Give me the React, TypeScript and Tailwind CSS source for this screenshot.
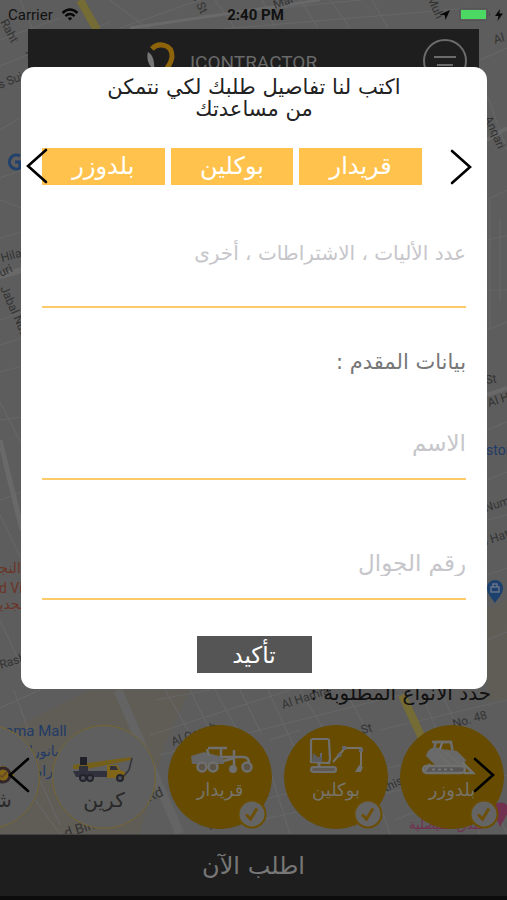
import type { ReactNode } from "react";

/**
 * Order request screen: the map page with its machine picker sits in the
 * back (dimmed), the request dialog lies over it.
 */

const ARABIC = "font-['DejaVu_Sans',sans-serif]";

/* ---- Map ---------------------------------------------------------- */
function StreetMap() {
  return (
    <svg
      aria-hidden="true"
      className="absolute inset-0 h-full w-full"
      viewBox="0 0 507 900"
      preserveAspectRatio="xMidYMid slice"
    >
      <rect width="507" height="900" fill="#5d5d5d" />
      <path d="M0 735 L90 690 L190 690 L165 745 L140 834 L0 834Z" fill="#605d57" />
      <path d="M487 610 L507 600 V700 H487Z" fill="#605d57" />
      <g stroke="#666666" fill="none" strokeWidth="1.2">
        <path d="M0 40 L60 18 M0 66 L110 22 M20 0 L60 92 M110 0 L150 30 M0 130 L30 112 M120 28 L200 0" />
        <path d="M215 0 L235 28 M262 0 L275 28 M300 0 L318 28 M330 0 L350 28 M372 0 L388 28 M200 16 L440 -8 M210 30 L470 8" />
        <path d="M0 178 L22 170 M0 200 L22 208 M0 238 L22 232 M0 320 L22 312 M0 345 L22 338 M0 372 L22 366 M0 420 L22 417 M0 402 L22 445 M0 500 L22 492 M0 515 L22 560 M0 620 L22 668" />
        <path d="M480 60 L507 48 M487 95 L507 150 M487 200 L507 190 M487 240 L507 236 M490 200 V330 M487 290 H507 M487 330 L507 322 M500 220 V300 M487 430 L507 422 M487 480 L507 472 M487 520 L507 515 M487 575 L507 568 M487 640 L507 632" />
        <path d="M0 708 L40 690 M14 690 L30 735 M155 700 L210 690 M150 735 L290 690 M160 755 L420 690 M165 690 L205 760 M190 690 L215 740 M215 690 L240 735 M240 690 L262 735 M268 690 L300 760 M300 690 L330 740 M345 690 L372 740 M420 690 L480 834 M440 690 L507 834 M380 730 L507 700 M270 770 L290 834 M262 800 L400 765 M260 820 L400 790 M375 790 L390 834 M395 820 L507 775 M35 800 L60 834 M40 780 L60 825 M270 740 L300 730" />
      </g>
      <g stroke="#696969" fill="none">
        <path d="M0 276 L22 270" strokeWidth="6" />
        <path d="M0 440 L22 530" strokeWidth="5" />
        <path d="M118 690 L180 834" strokeWidth="9" stroke="#646464" />
        <path d="M487 140 L507 128 M487 395 L507 388" strokeWidth="4" />
        <path d="M130 28 L320 0" strokeWidth="3" />
      </g>
      <path d="M80 0 L97 30" stroke="#756b35" strokeWidth="8" />
      <path d="M402 695 L422 738" stroke="#756b35" strokeWidth="8" />
      <g
        fill="#333333"
        className="font-['Roboto','DejaVu_Sans',sans-serif]"
        fontSize="12"
      >
        <text transform="translate(0 22) rotate(62)">Raht</text>
        <text transform="translate(25 52) rotate(65)">Ra</text>
        <text transform="translate(0 89) rotate(-22)">s Suj</text>
        <text transform="translate(192 -4) rotate(65)">a St</text>
        <text transform="translate(275 9) rotate(-20)">Mar</text>
        <text transform="translate(427 -2) rotate(66)">Muh</text>
        <text transform="translate(495 44) rotate(-18)">Al</text>
        <text transform="translate(484 118) rotate(66)">Anqari</text>
        <text transform="translate(2 262) rotate(-15)">Hilal</text>
        <text transform="translate(1 277) rotate(-25)">uri</text>
        <text transform="translate(0 288) rotate(66)">Jabal Nuur</text>
        <text transform="translate(486 384) rotate(-8)">St</text>
        <text transform="translate(489 407) rotate(-18)">Al Ha</text>
        <text transform="translate(486 512) rotate(-18)">Num</text>
        <text transform="translate(486 545) rotate(-18)">i Hat</text>
        <text transform="translate(1 669) rotate(-18)">Rash</text>
        <text transform="translate(283 709) rotate(-18)">Al Hamra</text>
        <text transform="translate(173 746) rotate(-20)">Al Qasab</text>
        <text transform="translate(362 734) rotate(-14)">St</text>
        <text transform="translate(454 728) rotate(-16)">No. 48</text>
        <text transform="translate(149 802) rotate(-24)" fontSize="14">Rd</text>
        <text transform="translate(66 838) rotate(-18)" fontSize="14">d Bin</text>
        <text transform="translate(386 792) rotate(-26)">this</text>
        <text transform="translate(210 830) rotate(-12)">Al</text>
      </g>
      <path d="M20 156 A7 7 0 1 0 20 168 V162 H15" stroke="#22406c" strokeWidth="3" fill="none" />
      <g className="font-['Roboto','DejaVu_Sans',sans-serif]" fontSize="14">
        <text x="486" y="455" fill="#233a66">store</text>
        <text x="5" y="736" fill="#233a66" fontSize="15">ama Mall</text>
        <text x="59" y="756" fill="#233a66" textAnchor="end">بانوراما</text>
        <text x="53" y="776" fill="#233a66" textAnchor="end">راما</text>
        <text x="-8" y="573" fill="#6b3427">النجد</text>
        <text x="-1" y="593" fill="#6b3427">d Vill</text>
        <text x="-8" y="609" fill="#6b3427">نجدية</text>
        <text x="409" y="829" fill="#71304f" fontSize="13">فندق الفيصلية</text>
      </g>
      <path d="M495 603 C492 598 487 594 487 588 A8 8 0 0 1 503 588 C503 594 498 598 495 603Z" fill="#1d416f" />
      <path d="M491 587 H499 V592 H491Z M493 587 V584 H497 V587" fill="none" stroke="#667287" strokeWidth="1.5" />
      <path d="M500 827 C497 818 492 814 492 810 A9 9 0 0 1 507 805 V814Z" fill="#71304f" />
    </svg>
  );
}

/* ---- Small drawings ----------------------------------------------- */
function Chevron({ side }: { side: "left" | "right" }) {
  return (
    <svg viewBox="0 0 22 36" className="h-9 w-[22px]" fill="none" stroke="#000" strokeWidth="2.6" strokeLinecap="round" strokeLinejoin="miter">
      <path d={side === "left" ? "M20 2 L2 18 L20 34" : "M2 2 L20 18 L2 34"} />
    </svg>
  );
}

function Bulldozer() {
  return (
    <svg viewBox="0 0 66 44" className="h-11 w-[66px]">
      <path d="M14 18 L17 8 H32 L34 20" fill="none" stroke="#6d6d6d" strokeWidth="2.5" />
      <path d="M13 8 H33" stroke="#6d6d6d" strokeWidth="2.5" />
      <path d="M7 22 C9 13 17 12 22 15 L38 17 L47 26 L43 34 L17 32Z" fill="#696969" />
      <path d="M23 9 L21 15" stroke="#777a88" strokeWidth="2" />
      <path d="M20 21 L33 32 M27 18 L40 30" stroke="#77736a" strokeWidth="1" />
      <rect x="4" y="32" width="42" height="7" rx="3.5" fill="#575654" stroke="#70706f" strokeWidth="2.5" />
      <path d="M11 30 L5 38 M43 28 L54 39 H45" stroke="#70706f" strokeWidth="2.5" fill="none" />
      <path d="M13 35.5 H36" stroke="#74747a" strokeWidth="2" strokeDasharray="3 3" />
    </svg>
  );
}

function Excavator() {
  return (
    <svg viewBox="0 0 66 44" className="h-11 w-[66px]">
      <path d="M8 28 V7 Q8 5 10 5 H24 Q26 5 26 7 L27 25 L26 29Z" fill="none" stroke="#6f6f6f" strokeWidth="2.2" />
      <path d="M10 19 L15 23 H19 V28 H9Z" fill="#5c5c60" />
      <path d="M18 19 V23" stroke="#62676f" strokeWidth="2" />
      <rect x="8" y="33" width="25" height="5" rx="2.5" fill="#5e5953" stroke="#6f6f6f" strokeWidth="2.2" />
      <path d="M16 29 V32" stroke="#6f6f6f" strokeWidth="3" />
      <path d="M30 28 L42 14 L58 14 L58 32" fill="none" stroke="#77736a" strokeWidth="2" />
      <path d="M39 14 L43 14 M56 16 H60 M35 22 L38 20" stroke="#65666b" strokeWidth="4" />
      <path d="M56 31 L60 33 L58 38 H52Z" fill="#70706f" />
    </svg>
  );
}

function Grader() {
  return (
    <svg viewBox="0 0 66 44" className="h-11 w-[66px]">
      <path d="M4 22 L17 18 L36 23 L37 30 H5Z" fill="#656565" />
      <path d="M21 14 H40 M20 15 L22 22 M34 15 V23" stroke="#6f6f6f" strokeWidth="2.5" />
      <path d="M35 23 H56 Q62 23 62 29 M47 16 V34 M36 27 L48 24" fill="none" stroke="#6f6f6f" strokeWidth="2.5" />
      <circle cx="15" cy="33" r="4.5" fill="#5b5447" stroke="#6f6f6f" strokeWidth="2.5" />
      <circle cx="26" cy="33" r="4.5" fill="#5b5447" stroke="#6f6f6f" strokeWidth="2.5" />
      <circle cx="46" cy="35" r="4" fill="#6f6f6f" />
      <circle cx="60" cy="33" r="4.5" fill="#5b5447" stroke="#6f6f6f" strokeWidth="2.5" />
    </svg>
  );
}

function CraneTruck() {
  return (
    <svg viewBox="0 0 66 44" className="h-11 w-[66px]">
      <path d="M2 19 L60 11 V14 L16 23 H2Z" fill="#74601a" />
      <rect x="9" y="11" width="7" height="8" fill="#1f2028" />
      <path d="M8 20 H17 V25 H8Z" fill="#30313a" />
      <path d="M2 25 H36 V31 H5Z" fill="#30313c" />
      <path d="M36 31 V19 H46 L49 24 L54 26 V32 H36Z" fill="#806616" />
      <path d="M39 20 H45 L47 24 H39Z" fill="#30313a" />
      <path d="M61 12 L58 24 L51 32" fill="none" stroke="#34353c" strokeWidth="1.6" />
      <g fill="#4e4e58" stroke="#23242b" strokeWidth="2">
        <circle cx="12" cy="32" r="3" />
        <circle cx="19" cy="32" r="3" />
        <circle cx="49" cy="32" r="3" />
      </g>
    </svg>
  );
}

function Loader() {
  return (
    <svg viewBox="0 0 66 44" className="h-11 w-[66px]">
      <path d="M14 24 L50 20 L60 30 H14Z" fill="#806616" />
      <circle cx="48" cy="29" r="7" fill="#806616" stroke="#33262a" strokeWidth="3" />
      <path d="M44 29 L47 31 L52 26" stroke="#6a4b28" strokeWidth="2" fill="none" />
    </svg>
  );
}

/* ---- Machine picker ----------------------------------------------- */
interface Machine {
  name: string;
  drawing: ReactNode;
  selected: boolean;
}

const machines: Machine[] = [
  { name: "بلدوزر", drawing: <Bulldozer />, selected: true },
  { name: "بوكلين", drawing: <Excavator />, selected: true },
  { name: "قريدار", drawing: <Grader />, selected: true },
  { name: "كرين", drawing: <CraneTruck />, selected: false },
  { name: "شيول", drawing: <Loader />, selected: false },
];

function MachineButton({ name, drawing, selected }: Machine) {
  return (
    <button
      type="button"
      aria-pressed={selected}
      className={`relative flex size-[104px] shrink-0 flex-col items-center rounded-full border ${
        selected
          ? "border-[#664b00] bg-[#664b00] pt-2 text-lg leading-6 text-[#77736a]"
          : "border-[#75652f] bg-[#5f5f5f] pt-5 text-xl leading-5 text-[#292929]"
      }`}
    >
      {drawing}
      <span>{name}</span>
      {selected && (
        <svg viewBox="0 0 30 30" className="absolute right-1 -bottom-px size-[30px]">
          <circle cx="15" cy="15" r="13.5" fill="#646464" stroke="#6b4e00" strokeWidth="2" />
          <path d="M9 15.5 L13.5 20 L20 9.5" fill="none" stroke="#6d4f08" strokeWidth="3" />
        </svg>
      )}
    </button>
  );
}

/* ---- Status bar and header ---------------------------------------- */
function StatusBar() {
  return (
    <div className="grid h-[29px] grid-cols-3 items-center pr-1 pl-2 font-['Roboto',sans-serif] text-[15px] leading-5 text-[#111]">
      <div className="flex items-center gap-2">
        <span>Carrier</span>
        <svg viewBox="0 0 18 13" className="h-[13px] w-[18px]" fill="none" stroke="#080808" strokeWidth="2.4">
          <path d="M1.5 5 Q9 -1.8 16.5 5 M4.4 8.2 Q9 4 13.6 8.2" />
          <path d="M6.8 10.2 Q9 8.4 11.2 10.2 L9 12.5Z" fill="#080808" stroke="none" />
        </svg>
      </div>
      <span className="text-center font-bold">2:40 PM</span>
      <div className="flex items-center justify-end gap-1">
        <svg viewBox="0 0 12 12" className="mr-1 size-3" fill="#080808">
          <path d="M11 1 L6.5 11 L5.8 6.3 L1 5.6Z" />
        </svg>
        <svg viewBox="0 0 32 13" className="h-[13px] w-8">
          <rect x="0.5" y="0.5" width="28" height="12" rx="2" fill="none" stroke="#555" />
          <rect x="2" y="2" width="25" height="9" fill="#4bd863" />
          <path d="M30 4 Q32 6.5 30 9Z" fill="#444" />
        </svg>
        <svg viewBox="0 0 8 12" className="h-3 w-2" fill="#080808">
          <path d="M5 0 L0 7 H3.5 L2.5 12 L8 4.6 H4.4Z" />
        </svg>
      </div>
    </div>
  );
}

function Header() {
  return (
    <header className="mx-7 flex h-16 justify-between bg-[#1e1e1e] pr-3">
      <div className="flex flex-1 items-start justify-center gap-3 pt-3 pl-3">
        <svg viewBox="0 0 32 36" className="h-9 w-8">
          <path d="M6 8 C12 1 26 3 26 15 C26 20 24 23 21 27" fill="none" stroke="#8e640b" strokeWidth="5" />
          <path d="M2 11 C6 13 9 19 8 29 C3 25 0 18 2 11Z" fill="#777" />
        </svg>
        <span className="pt-2 font-['Liberation_Sans_Narrow','Roboto',sans-serif] text-[19px] leading-7 text-[#696969]">
          ICONTRACTOR
        </span>
      </div>
      <button type="button" aria-label="القائمة" className="mt-[10px] size-11 rounded-full">
        <svg viewBox="0 0 44 44" className="size-11" fill="none" stroke="#6b6b6b" strokeWidth="2">
          <circle cx="22" cy="22" r="21" />
          <path d="M11 18 H33 M14 26 H30" />
        </svg>
      </button>
    </header>
  );
}

/* ---- Request dialog ----------------------------------------------- */
const chips = ["بلدوزر", "بوكلين", "قريدار"];

const fieldClass =
  "block w-full resize-none border-b-2 border-[#fccb6c] bg-transparent text-right leading-7 text-[#555] outline-none placeholder:text-[#c6c6ca] placeholder:opacity-100";

function RequestDialog() {
  return (
    <form
      role="dialog"
      aria-labelledby="request-title"
      className="relative w-full rounded-[13px] bg-white px-[21px] pt-[9px] pb-4"
    >
      <h1 id="request-title" className="mx-auto max-w-[340px] text-center text-[21px] leading-[22px] text-[#222]">
        اكتب لنا تفاصيل طلبك لكي نتمكن
        <br />
        من مساعدتك
      </h1>

      <div dir="ltr" className="relative mt-7 flex h-[37px] items-center">
        <button type="button" aria-label="السابق" className="absolute top-0 -left-4">
          <Chevron side="left" />
        </button>
        <ul className="flex flex-1 gap-1.5">
          {chips.map((chip) => (
            <li key={chip} className="flex-1 bg-[#ffc34d] text-center text-2xl leading-[37px] text-white">
              {chip}
            </li>
          ))}
        </ul>
        <button type="button" aria-label="التالي" className="-mr-1.5 ml-7">
          <Chevron side="right" />
        </button>
      </div>

      <label htmlFor="details" className="sr-only">تفاصيل الطلب</label>
      <textarea
        id="details"
        placeholder="عدد الأليات ، الاشتراطات ، أخرى"
        className={`${fieldClass} mt-[54px] h-[69px] text-xl`}
      />

      <p className="mt-10 text-[21px] leading-7 text-[#777]">بيانات المقدم :</p>

      <label htmlFor="name" className="sr-only">الاسم</label>
      <input id="name" type="text" placeholder="الاسم" className={`${fieldClass} mt-8 h-[72px] text-[23px]`} />

      <label htmlFor="mobile" className="sr-only">رقم الجوال</label>
      <input
        id="mobile"
        type="tel"
        dir="rtl"
        placeholder="رقم الجوال"
        className={`${fieldClass} mt-12 h-[72px] text-[23px]`}
      />

      <button type="submit" className="mx-auto mt-9 block h-[37px] w-[115px] bg-[#555] text-[23px] leading-8 text-white">
        تأكيد
      </button>
    </form>
  );
}

/* ---- Screen ------------------------------------------------------- */
export default function App() {
  return (
    <div className={`relative flex min-h-screen flex-col overflow-hidden ${ARABIC}`}>
      <StreetMap />

      <div className="relative flex flex-1 flex-col">
        <StatusBar />
        <Header />

        <main dir="rtl" className="flex flex-1 flex-col justify-end">
          <h2 className="px-4 text-xl leading-8 text-[#111]">حدد الأنواع المطلوبة :</h2>
          <div className="relative mt-4 pb-[5px]">
            <div className="flex gap-3 overflow-hidden px-[3px]">
              {machines.map((machine) => (
                <MachineButton key={machine.name} {...machine} />
              ))}
            </div>
            <button type="button" aria-label="السابق" className="absolute top-8 left-2">
              <Chevron side="left" />
            </button>
            <button type="button" aria-label="التالي" className="absolute top-8 right-3">
              <Chevron side="right" />
            </button>
          </div>
        </main>

        <button
          type="button"
          dir="rtl"
          className="h-[66px] w-full border-t border-b-4 border-t-[#444] border-b-[#0c0c0c] bg-[#1e1e1e] text-2xl text-[#777]"
        >
          اطلب الآن
        </button>
      </div>

      <div dir="rtl" className="absolute inset-0 flex items-start pt-[67px] pr-5 pl-[21px]">
        <RequestDialog />
      </div>
    </div>
  );
}
